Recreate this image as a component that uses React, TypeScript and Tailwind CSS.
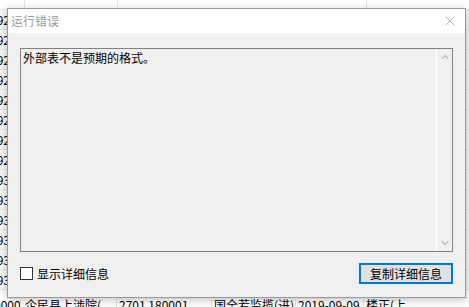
import { X, ChevronUp, ChevronDown } from "lucide-react";

const rows = ["92", "92", "92", "92", "92", "92", "92", "92", "93", "93", "93", "93", "93", "93"];

const App = () => {
  return (
    <div
      className="relative w-[469px] h-[307px] overflow-hidden bg-white text-[12px] text-black"
      style={{ fontFamily: '"Noto Sans CJK SC", "Noto Sans", sans-serif' }}
    >
      {/* spreadsheet behind */}
      <div className="flex flex-col">
        <div className="flex h-[10px] border-b border-[#e4e4e4]">
          <div className="w-[25px] border-r border-[#e4e4e4]" />
          <div className="w-[93px] border-r border-[#e4e4e4]" />
          <div className="w-[249px] border-r border-[#e4e4e4]" />
        </div>
        {rows.map((r, i) => (
          <div key={i} className="flex h-[20px] items-center border-b border-[#e4e4e4] bg-[#f7f7f7] leading-none">
            <span className="flex w-[10px] justify-end whitespace-nowrap">{r}</span>
          </div>
        ))}
        <div className="flex h-[24px] items-start pt-[9px] leading-none text-[12px] whitespace-nowrap">
          <span className="w-[26px] -ml-[6px]">0000</span>
          <span className="w-[96px] border-l border-[#e4e4e4] pl-[4px]">企民县上涉院(</span>
          <span className="w-[95px] border-l border-[#e4e4e4] pl-[2px]">2701 180001</span>
          <span className="w-[84px] border-l border-[#e4e4e4] pl-[2px]">国全若监揽(进)</span>
          <span className="w-[68px] border-l border-[#e4e4e4] pl-[2px]">2019-09-09</span>
          <span className="border-l border-[#e4e4e4] pl-[2px]">楼正(上</span>
        </div>
      </div>

      {/* dialog */}
      <div className="absolute left-[7px] top-[8px] w-[459px] h-[290px] flex flex-col border border-[#9a9a9a] bg-[#f0f0f0] shadow-[0_2px_8px_rgba(0,0,0,0.25)]">
        <div className="flex h-[25px] items-center justify-between bg-white pl-[3px] pr-[7px]">
          <span className="text-[#9b9b9b] text-[12px]">运行错误</span>
          <X size={16} strokeWidth={1} className="text-[#8a8a8a]" />
        </div>
        <div className="flex flex-col flex-1 px-[12px] pt-[15px] pb-[13px]">
          <div className="flex h-[204px] border border-[#828282] bg-[#f0f0f0]">
            <div className="flex-1 pl-[2px] pt-[1px] leading-[16px]">外部表不是预期的格式。</div>
            <div className="flex w-[16px] flex-col items-center justify-between border-l border-white py-[2px]">
              <ChevronUp size={12} strokeWidth={3} className="text-[#c2c2c2]" />
              <ChevronDown size={12} strokeWidth={3} className="text-[#c2c2c2]" />
            </div>
          </div>
          <div className="mt-[11px] flex items-center justify-between">
            <label className="flex items-center gap-[4px]">
              <span className="block h-[13px] w-[13px] border border-[#333] bg-white" />
              <span>显示详细信息</span>
            </label>
            <button className="flex h-[21px] w-[94px] items-center justify-center border-2 border-[#0078d7] bg-[#e1e1e1] text-[12px] leading-none">
              复制详细信息
            </button>
          </div>
        </div>
      </div>
    </div>
  );
};

export default App;
